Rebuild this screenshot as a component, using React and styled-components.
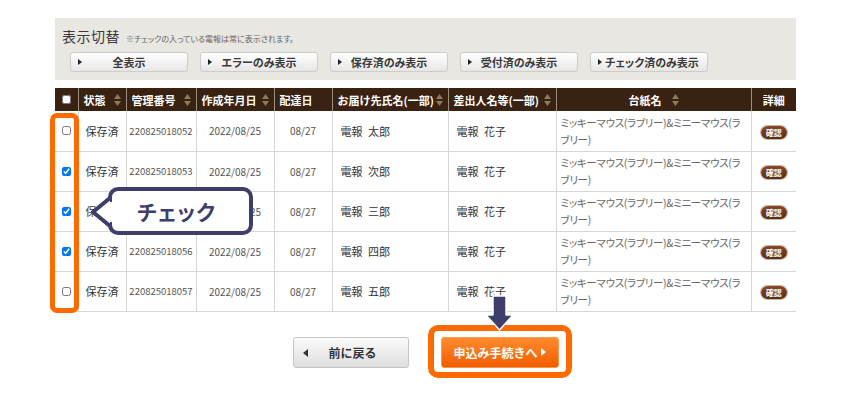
import React from "react";
import styled, { createGlobalStyle } from "styled-components";

const Global = createGlobalStyle`
  html, body { margin: 0; padding: 0; background: #fff; }
  body { font-family: "Noto Sans CJK JP", "Noto Sans", sans-serif; color: #333; }
  * { box-sizing: border-box; }
`;

const Page = styled.div`
  position: relative;
  width: 850px;
  height: 397px;
  padding: 18px 54px 0 55px;
  overflow: hidden;
`;

const Panel = styled.div`
  background: #e9e7e2;
  padding: 8px 7px 8px;
`;

const TitleRow = styled.div`
  display: flex;
  align-items: baseline;
  gap: 6px;
  height: 18px;
`;

const Title = styled.span`
  font-size: 14px;
  color: #3a3a3a;
  letter-spacing: 0.5px;
`;

const Note = styled.span`
  font-size: 8px;
  color: #666;
  font-feature-settings: "palt";
`;

const FilterRow = styled.div`
  display: flex;
  gap: 12px;
  margin-top: 8px;
  padding-left: 8px;
`;

const FilterBtn = styled.button`
  position: relative;
  width: 118px;
  height: 20px;
  border: 1px solid #cfcdc8;
  border-radius: 3px;
  background: linear-gradient(#ffffff, #e6e6e6);
  font-family: inherit;
  font-size: 11px;
  font-weight: bold;
  color: #3a3a3a;
  padding: 0 0 0 ${(p) => p.$pl || 0}px;
  display: flex;
  align-items: center;
  justify-content: ${(p) => (p.$left ? "flex-start" : "center")};
  font-feature-settings: "palt";
  cursor: pointer;
  &::before {
    content: "";
    position: absolute;
    left: 7px;
    top: 6px;
    border-style: solid;
    border-width: 3.5px 0 3.5px 4px;
    border-color: transparent transparent transparent #222;
  }
`;

const Table = styled.table`
  margin-top: 8px;
  width: 741px;
  border-collapse: collapse;
  table-layout: fixed;
`;

const Th = styled.th`
  height: 23px;
  background: #3a2212;
  color: #fff;
  font-size: 11px;
  font-weight: bold;
  text-align: ${(p) => p.$align || "left"};
  padding: 0 5px;
  border-left: 1px solid #9d8f80;
  white-space: nowrap;
  &:first-child { border-left: none; }
`;

const ThInner = styled.div`
  display: flex;
  align-items: center;
  justify-content: ${(p) => p.$center ? "center" : "space-between"};
  gap: ${(p) => (p.$center ? "10px" : "0")};
`;

const Td = styled.td`
  height: 40px;
  border: 1px solid #d6d6d6;
  border-top: none;
  font-size: ${(p) => p.$size || 11}px;
  color: ${(p) => p.$color || "#333"};
  text-align: ${(p) => p.$align || "center"};
  padding: 0 ${(p) => (p.$pad ?? 4)}px;
  line-height: ${(p) => p.$lh || "normal"};
  vertical-align: middle;
  &:first-child { border-left: none; }
  &:last-child { border-right: none; }
`;

const Check = styled.input`
  width: 9px;
  height: 9px;
  margin: 0;
  display: block;
  margin: 0 auto;
`;

const Mount = styled.div`
  font-feature-settings: "palt";
  letter-spacing: -0.3px;
`;

const Badge = styled.span`
  display: inline-block;
  width: 26px;
  height: 13px;
  line-height: 13px;
  border-radius: 7px;
  background: linear-gradient(#8a4a24, #5a2c10);
  color: #fff;
  font-size: 8px;
  font-weight: bold;
  box-shadow: 0 0 0 1px #c9b7a8;
`;

const Bottom = styled.div`
  display: flex;
  justify-content: center;
  gap: 32px;
  margin-top: 25px;
`;

const BackBtn = styled.button`
  position: relative;
  width: 116px;
  height: 31px;
  border: 1px solid #c4c4c4;
  border-radius: 3px;
  background: linear-gradient(#fbfbfb, #dedede);
  font-family: inherit;
  font-size: 12px;
  font-weight: bold;
  color: #333;
  padding-left: 10px;
  &::before {
    content: "";
    position: absolute;
    left: 9px;
    top: 11px;
    border-style: solid;
    border-width: 4px 5px 4px 0;
    border-color: transparent #333 transparent transparent;
  }
`;

const SubmitWrap = styled.span`
  position: relative;
  display: inline-block;
`;

const SubmitBtn = styled.button`
  width: 118px;
  height: 31px;
  border: 1px solid #ff9a4a;
  border-radius: 3px;
  background: linear-gradient(#ff8b2e, #f25c00);
  font-family: inherit;
  font-size: 12px;
  font-weight: bold;
  color: #fff;
  display: flex;
  align-items: center;
  justify-content: center;
  gap: 3px;
  padding: 0;
  &::after {
    content: "";
    border-style: solid;
    border-width: 4px 0 4px 5px;
    border-color: transparent transparent transparent #fff;
  }
`;

const SubmitFrame = styled.span`
  position: absolute;
  left: -13px;
  right: -13px;
  top: -12px;
  bottom: -10px;
  border: 6px solid #ff6a00;
  border-radius: 10px;
  pointer-events: none;
`;

const Arrow = styled.svg`
  position: absolute;
  left: 43px;
  top: -42px;
`;

const CheckFrame = styled.div`
  position: absolute;
  left: 50px;
  top: 113px;
  width: 29px;
  height: 200px;
  border: 5px solid #ff6a00;
  border-radius: 7px;
  pointer-events: none;
`;

const Bubble = styled.div`
  position: absolute;
  left: 108px;
  top: 187px;
  width: 145px;
  height: 48px;
  border: 4px solid #3e3d6c;
  border-radius: 10px;
  background: #fff;
  display: flex;
  align-items: center;
  justify-content: center;
  padding-right: 8px;
  font-size: 21px;
  font-weight: bold;
  color: #3e3d6c;
  letter-spacing: 1px;
  font-feature-settings: "palt";
`;

const Pointer = styled.svg`
  position: absolute;
  left: -21px;
  top: 6px;
`;

const Sort = () => (
  <svg width="7" height="12" viewBox="0 0 7 12">
    <path d="M3.5 0 L7 5 L0 5 Z" fill="#8c7b5f" />
    <path d="M0 7 L7 7 L3.5 12 Z" fill="#8c7b5f" />
  </svg>
);

const rows = [
  { c: false, no: "220825018052", to: "電報\u2002太郎" },
  { c: true, no: "220825018053", to: "電報\u2002次郎" },
  { c: true, no: "220825018054", to: "電報\u2002三郎" },
  { c: true, no: "220825018056", to: "電報\u2002四郎" },
  { c: false, no: "220825018057", to: "電報\u2002五郎" },
];

export default function App() {
  return (
    <>
      <Global />
      <Page>
        <Panel>
          <TitleRow>
            <Title>表示切替</Title>
            <Note>※チェックの入っている電報は常に表示されます。</Note>
          </TitleRow>
          <FilterRow>
            <FilterBtn>全表示</FilterBtn>
            <FilterBtn>エラーのみ表示</FilterBtn>
            <FilterBtn>保存済のみ表示</FilterBtn>
            <FilterBtn>受付済のみ表示</FilterBtn>
            <FilterBtn $left $pl={14}>チェック済のみ表示</FilterBtn>
          </FilterRow>
        </Panel>

        <Table>
          <colgroup>
            <col style={{ width: 23 }} />
            <col style={{ width: 48 }} />
            <col style={{ width: 70 }} />
            <col style={{ width: 78 }} />
            <col style={{ width: 58 }} />
            <col style={{ width: 116 }} />
            <col style={{ width: 108 }} />
            <col style={{ width: 195 }} />
            <col style={{ width: 45 }} />
          </colgroup>
          <thead>
            <tr>
              <Th $align="center"><Check type="checkbox" readOnly /></Th>
              <Th><ThInner><span>状態</span><Sort /></ThInner></Th>
              <Th><ThInner><span>管理番号</span><Sort /></ThInner></Th>
              <Th><ThInner><span>作成年月日</span><Sort /></ThInner></Th>
              <Th><ThInner><span>配達日</span></ThInner></Th>
              <Th><ThInner><span>お届け先氏名(一部)</span><Sort /></ThInner></Th>
              <Th><ThInner><span>差出人名等(一部)</span><Sort /></ThInner></Th>
              <Th><ThInner $center><span>台紙名</span><Sort /></ThInner></Th>
              <Th $align="center">詳細</Th>
            </tr>
          </thead>
          <tbody>
            {rows.map((r) => (
              <tr key={r.no}>
                <Td $pad={0}><Check type="checkbox" defaultChecked={r.c} /></Td>
                <Td>保存済</Td>
                <Td $size={9.5} $color="#555" $pad={2}>{r.no}</Td>
                <Td $size={10} $color="#555">2022/08/25</Td>
                <Td $size={10} $color="#555">08/27</Td>
                <Td $align="left" $pad={8}>{r.to}</Td>
                <Td $align="left" $pad={8}>{"電報\u2002花子"}</Td>
                <Td $align="left" $size={10.5} $color="#666" $pad={4} $lh="17px">
                  <Mount>ミッキーマウス(ラブリー)&amp;ミニーマウス(ラブリー)</Mount>
                </Td>
                <Td><Badge>確認</Badge></Td>
              </tr>
            ))}
          </tbody>
        </Table>

        <Bottom>
          <BackBtn>前に戻る</BackBtn>
          <SubmitWrap>
            <SubmitBtn>申込み手続きへ</SubmitBtn>
            <SubmitFrame />
            <Arrow width="31" height="37" viewBox="0 0 31 37">
              <path
                d="M9 1 H22 V20 H29 L15.5 35 L2 20 H9 Z"
                fill="#3e3d6c"
                stroke="#fff"
                strokeWidth="1.5"
                strokeLinejoin="round"
              />
            </Arrow>
          </SubmitWrap>
        </Bottom>

        <CheckFrame />
        <Bubble>
          <Pointer width="24" height="30" viewBox="0 0 24 30">
            <path d="M19 1 L2 15 L19 29 Z" fill="#fff" />
            <rect x="14" y="5" width="10" height="20" fill="#fff" />
            <path
              d="M19 1 L2 15 L19 29"
              fill="none"
              stroke="#3e3d6c"
              strokeWidth="4"
              strokeLinejoin="round"
              strokeLinecap="round"
            />
          </Pointer>
          チェック
        </Bubble>
      </Page>
    </>
  );
}
